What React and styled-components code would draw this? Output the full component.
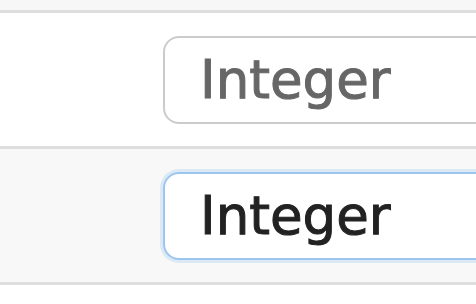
import React from "react";
import styled, { createGlobalStyle } from "styled-components";

const Global = createGlobalStyle`
  html, body {
    margin: 0;
    padding: 0;
    background: #ffffff;
    overflow: hidden;
  }
`;

const Page = styled.div`
  width: 476px;
  height: 304px;
  font-family: "DejaVu Sans", "Liberation Sans", sans-serif;
`;

const TopStrip = styled.div`
  height: 10px;
  background: #f7f7f7;
`;

const Row = styled.div`
  display: flex;
  align-items: center;
  justify-content: flex-end;
  height: 133px;
  border-top: 3px solid #dedede;
  background: ${({ $shaded }) => ($shaded ? "#f8f8f8" : "#ffffff")};
  overflow: hidden;
`;

const BottomLine = styled.div`
  border-top: 3px solid #dedede;
`;

const Field = styled.input`
  box-sizing: border-box;
  width: 330px;
  height: 88px;
  margin-right: -17px;
  padding: 0 0 0 35px;
  border-radius: 16px;
  border: 2px solid ${({ $focused }) => ($focused ? "#9dc6ef" : "#cbcbcb")};
  box-shadow: ${({ $focused }) =>
    $focused ? "0 0 0 3px rgba(170, 205, 240, 0.35)" : "none"};
  background: #ffffff;
  font-family: inherit;
  font-size: 53px;
  color: ${({ $focused }) => ($focused ? "#222222" : "#666666")};
  -webkit-text-stroke: 1px ${({ $focused }) => ($focused ? "#222222" : "#666666")};
  outline: none;
`;

const App = () => {
  return (
    <Page>
      <Global />
      <TopStrip />
      <Row>
        <Field defaultValue="Integer" readOnly />
      </Row>
      <Row $shaded>
        <Field defaultValue="Integer" readOnly $focused />
      </Row>
      <BottomLine />
    </Page>
  );
};

export default App;
